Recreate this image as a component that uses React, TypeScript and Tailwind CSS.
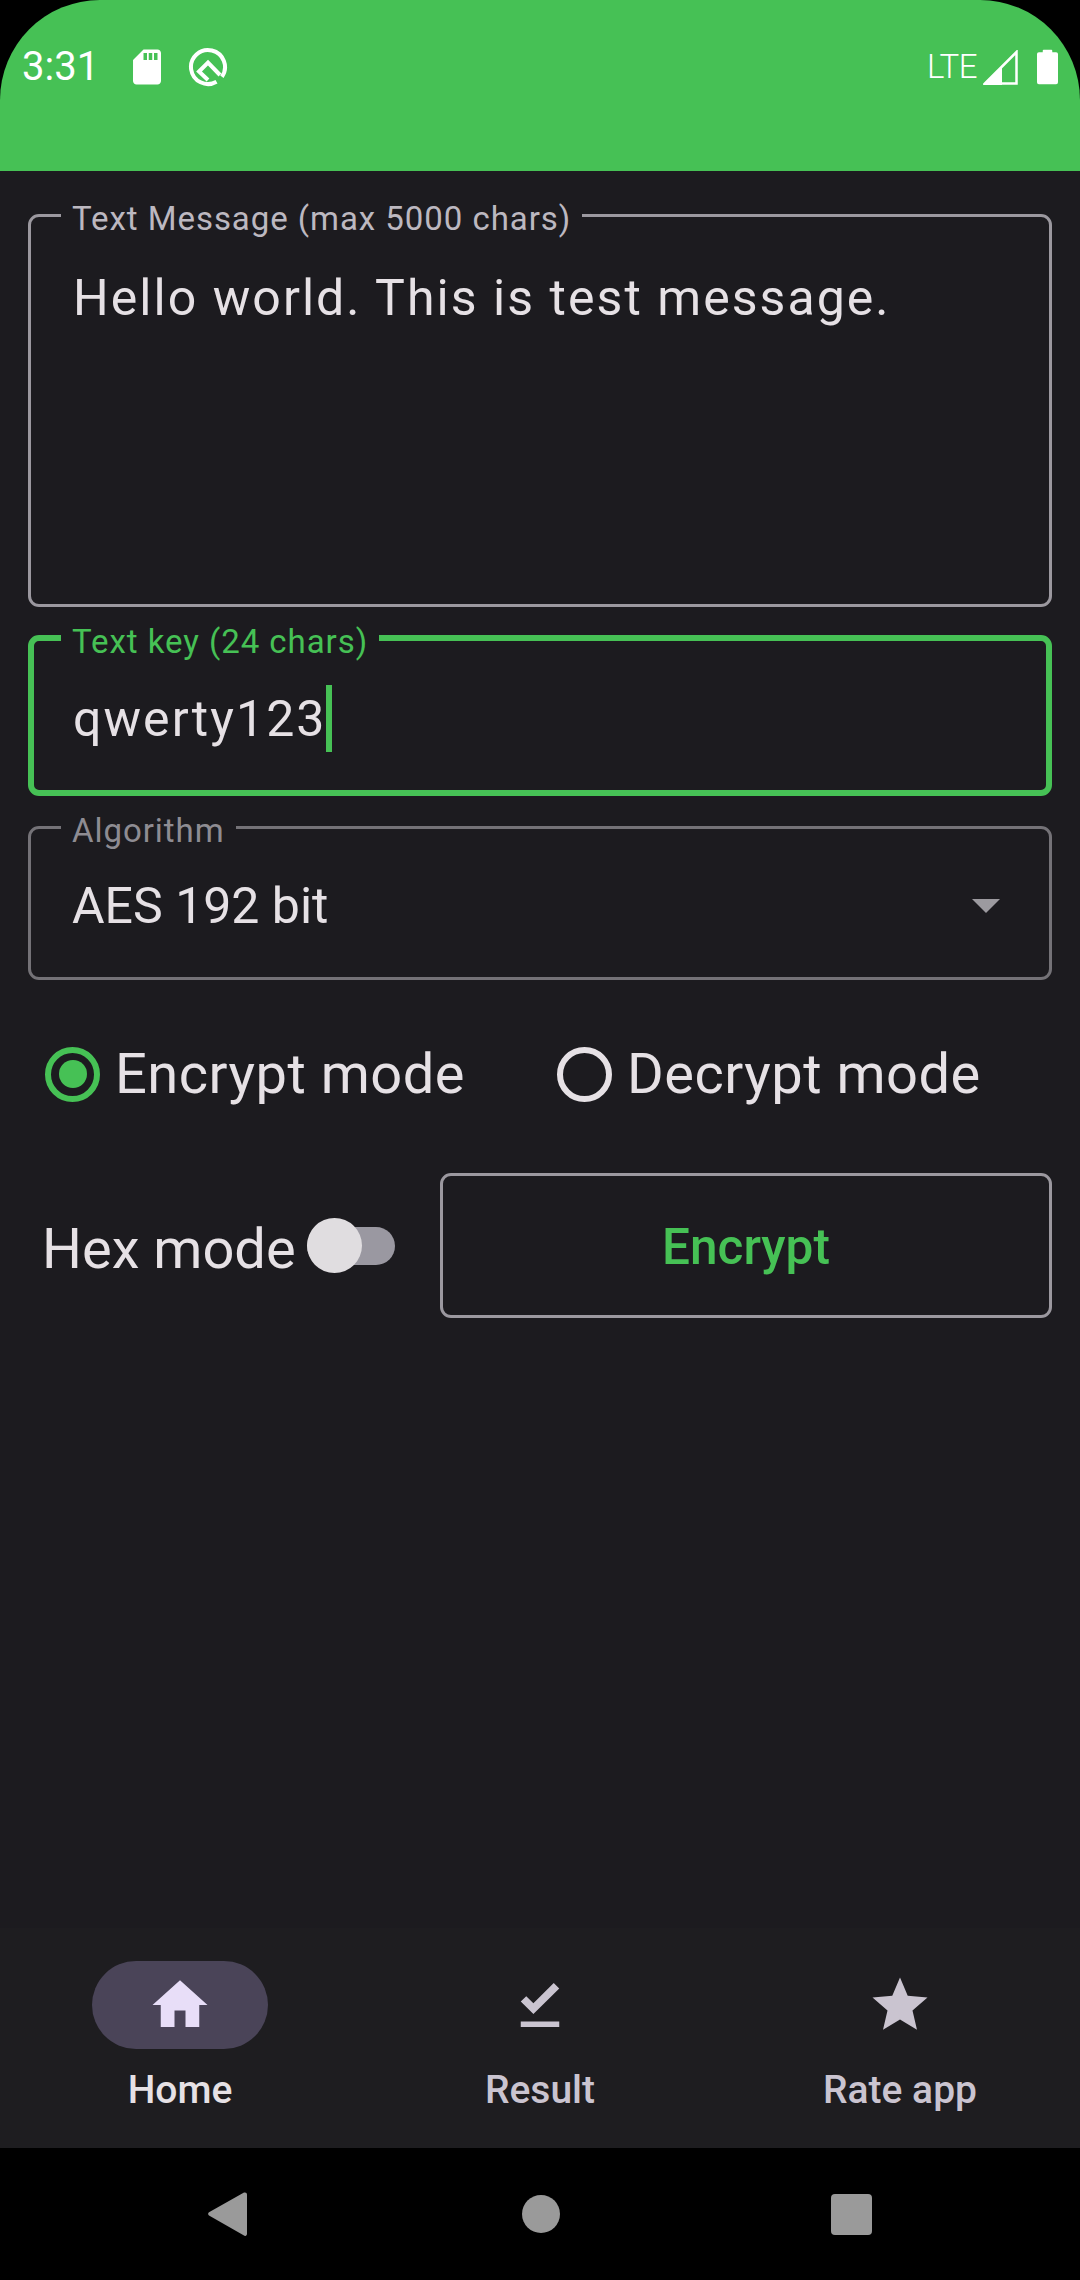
const Field = ({
  label,
  tone = 'normal',
  heightClass,
  children,
}: {
  label: string;
  tone?: 'normal' | 'focused' | 'dim';
  heightClass: string;
  children: React.ReactNode;
}) => {
  const border =
    tone === 'focused'
      ? 'border-[6px] border-[#46c155] pl-[27px]'
      : tone === 'dim'
        ? 'border-[3px] border-[#747277] pl-[30px]'
        : 'border-[3px] border-[#9b989f] pl-[30px]';
  const labelColor =
    tone === 'focused' ? 'text-[#46c155]' : tone === 'dim' ? 'text-[#8e8c92]' : 'text-[#bcb8c0]';

  return (
    <fieldset className={`${heightClass} ${border} rounded-[11px] m-0 pr-[30px] pb-0 pt-0 min-w-0`}>
      <legend className={`${labelColor} pl-[11px] pr-[11px] pt-[8px] text-[33px] leading-[38px] tracking-[0.95px]`}>
        {label}
      </legend>
      {children}
    </fieldset>
  );
};

const Radio = ({ checked, label }: { checked?: boolean; label: string }) => {
  return (
    <div className="flex items-center gap-[15px]">
      <div
        className={`w-[55px] h-[55px] rounded-full border-[6px] flex items-center justify-center ${
          checked ? 'border-[#46c155]' : 'border-[#e6e1e5]'
        }`}
      >
        {checked && <div className="w-[28px] h-[28px] rounded-full bg-[#46c155]" />}
      </div>
      <span className="text-[56px] leading-[64px] tracking-[0.5px] text-[#e6e1e5]">{label}</span>
    </div>
  );
};

const NavItem = ({ label, active, d }: { label: string; active?: boolean; d: string }) => {
  return (
    <div className="flex-1 flex flex-col items-center pt-[33px]">
      <div
        className={`w-[176px] h-[88px] rounded-full flex items-center justify-center ${
          active ? 'bg-[#4a4458]' : ''
        }`}
      >
        <svg width="66" height="66" viewBox="0 0 24 24" fill={active ? '#e8def8' : '#cac4d0'}>
          <path d={d} />
        </svg>
      </div>
      <span
        className={`mt-[14px] text-[39px] leading-[55px] font-medium ${
          active ? 'text-[#e6e1e5]' : 'text-[#cac4d0]'
        }`}
      >
        {label}
      </span>
    </div>
  );
};

export default function App() {
  return (
    <div className="w-[1080px] h-[2280px] bg-black flex flex-col overflow-hidden font-['Roboto',sans-serif]">
      {/* status bar */}
      <div className="h-[171px] shrink-0 rounded-t-[100px] bg-[#46c155] flex items-start justify-between pt-[46px] pl-[22px] pr-[22px] text-white">
        <div className="flex items-center">
          <span className="text-[40px] leading-[42px] w-[104px]">3:31</span>
          <svg width="42" height="42" viewBox="0 0 24 24" fill="#fff">
            <path d="M18 2h-8L4.02 8 4 20c0 1.1.9 2 2 2h12c1.1 0 2-.9 2-2V4c0-1.1-.9-2-2-2zm-6 6h-2V4h2v4zm3 0h-2V4h2v4zm3 0h-2V4h2v4z" />
          </svg>
          <svg className="ml-[19px]" width="42" height="42" viewBox="0 0 42 42" fill="none" stroke="#fff">
            <path d="M29.5 35.7 A17 17 0 1 1 34.9 30.75" strokeWidth="4" />
            <path d="M21 34 L12 25.5 L21 16.5 L33 29" strokeWidth="4" />
          </svg>
        </div>
        <div className="flex items-center">
          <span className="text-[33px] leading-[42px] font-light tracking-[-0.5px]">LTE</span>
          <svg className="ml-[6px]" width="35" height="35" viewBox="0 0 35 35" fill="none">
            <path d="M2 33.5 L33.5 2 L33.5 33.5 Z" stroke="#fff" strokeWidth="2.5" />
            <path d="M0 35 L19 16 L19 35 Z" fill="#fff" />
          </svg>
          <svg className="ml-[19px]" width="21" height="36" viewBox="0 0 22 36" fill="#fff">
            <path d="M6 2.5V1a1 1 0 0 1 1-1h8a1 1 0 0 1 1 1v1.5h4a2 2 0 0 1 2 2V34a2 2 0 0 1-2 2H2a2 2 0 0 1-2-2V4.5a2 2 0 0 1 2-2z" />
          </svg>
        </div>
      </div>

      {/* form */}
      <div className="flex-1 bg-[#1c1b1f] pl-[28px] pr-[28px] pt-[21px] flex flex-col">
        <Field label="Text Message (max 5000 chars)" heightClass="h-[415px]">
          <div className="text-[50px] leading-[60px] tracking-[2.05px] text-[#e6e1e5] pt-[30px] pl-[12px]">
            Hello world. This is test message.
          </div>
        </Field>
        <div className="mt-[8px]">
          <Field label="Text key (24 chars)" tone="focused" heightClass="h-[181px]">
            <div className="flex items-center pl-[12px] pt-[24px]">
              <span className="text-[50px] leading-[60px] tracking-[2.05px] text-[#e6e1e5]">qwerty123</span>
              <div className="w-[6px] h-[67px] bg-[#46c155]" />
            </div>
          </Field>
        </div>
        <div className="mt-[8px]">
          <Field label="Algorithm" tone="dim" heightClass="h-[176px]">
            <div className="flex items-center justify-between pl-[11px] pr-[19px] pt-[26px]">
              <span className="text-[50px] leading-[60px] text-[#e6e1e5]">AES 192 bit</span>
              <svg width="28" height="14" viewBox="0 0 28 14" fill="#9c9a9f">
                <path d="M0 0h28L14 14z" />
              </svg>
            </div>
          </Field>
        </div>

        <div className="flex items-center mt-[62px] pl-[17px]">
          <div className="w-[512px]">
            <Radio checked label="Encrypt mode" />
          </div>
          <Radio label="Decrypt mode" />
        </div>

        <div className="flex items-center mt-[67px]">
          <span className="text-[56px] leading-[64px] text-[#e6e1e5] pl-[14px] pt-[6px] w-[279px]">Hex mode</span>
          <div className="relative w-[88px] h-[38px] mr-[45px] rounded-full bg-[#9a98a1]">
            <div className="absolute left-0 top-[-9px] w-[55px] h-[55px] rounded-full bg-[#e0dde0]" />
          </div>
          <button className="flex-1 h-[145px] pt-[4px] rounded-[11px] border-[3px] border-[#9b989f] bg-transparent text-[49.5px] font-medium text-[#46c155]">
            Encrypt
          </button>
        </div>
      </div>

      {/* bottom nav */}
      <div className="h-[220px] shrink-0 bg-[#1e1d20] flex">
        <NavItem label="Home" active d="M10 20v-6h4v6h5v-8h3L12 3 2 12h3v8z" />
        <NavItem label="Result" d="M5 18h14v2H5v-2zm4.6-2.7L5 10.7l2-1.9 2.6 2.6L17 4l2 2-9.4 9.3z" />
        <NavItem
          label="Rate app"
          d="M12 17.27L18.18 21l-1.64-7.03L22 9.24l-7.19-.61L12 2 9.19 8.63 2 9.24l5.46 4.73L5.82 21z"
        />
      </div>

      {/* android nav */}
      <div className="h-[132px] shrink-0 bg-black flex items-center justify-center gap-[271px]">
        <svg className="mr-[4px]" width="39" height="44" viewBox="0 0 39 44" fill="#9a9a9a">
          <path d="M37 0.5a2 2 0 0 1 2 2V42a2 2 0 0 1-3 1.6L1 23.5a2 2 0 0 1 0-3.3L36 0.5z" />
        </svg>
        <div className="w-[38px] h-[38px] rounded-full bg-[#9a9a9a]" />
        <div className="w-[41px] h-[41px] rounded-[4px] bg-[#9a9a9a]" />
      </div>
    </div>
  );
}
